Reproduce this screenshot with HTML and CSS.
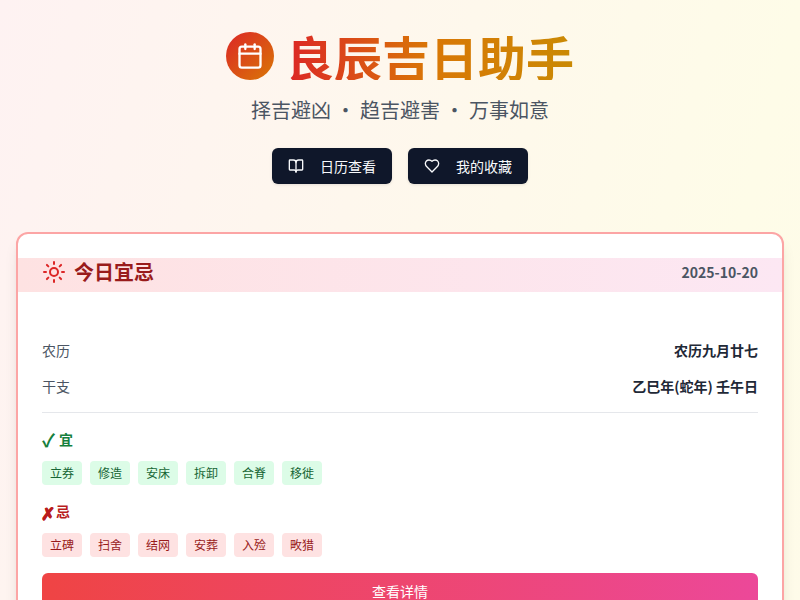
FILE: index.html
```
<!DOCTYPE html>
<html lang="zh-CN">
<head>
    <meta charset="UTF-8">
    <meta name="viewport" content="width=device-width, initial-scale=1.0">
    <title>良辰吉日助手</title>
    <link rel="stylesheet" href="styles.css">
</head>
<body>

<div class="container">
    <!-- 页头 -->
    <header class="header">
        <div class="title-row">
            <div class="logo">
                <svg class="icon logo-icon" viewBox="0 0 24 24"><path d="M8 2v4"/><path d="M16 2v4"/><rect width="18" height="18" x="3" y="4" rx="2"/><path d="M3 10h18"/></svg>
            </div>
            <h1>良辰吉日助手</h1>
        </div>
        <p class="subtitle">择吉避凶 · 趋吉避害 · 万事如意</p>
        <nav class="nav">
            <button class="nav-btn">
                <svg class="icon" viewBox="0 0 24 24"><path d="M12 7v14"/><path d="M3 18a1 1 0 0 1-1-1V4a1 1 0 0 1 1-1h5a4 4 0 0 1 4 4 4 4 0 0 1 4-4h5a1 1 0 0 1 1 1v13a1 1 0 0 1-1 1h-6a3 3 0 0 0-3 3 3 3 0 0 0-3-3z"/></svg>
                日历查看
            </button>
            <button class="nav-btn">
                <svg class="icon" viewBox="0 0 24 24"><path d="M19 14c1.49-1.46 3-3.21 3-5.5A5.5 5.5 0 0 0 16.5 3c-1.76 0-3 .5-4.5 2-1.5-1.5-2.74-2-4.5-2A5.5 5.5 0 0 0 2 8.5c0 2.3 1.5 4.05 3 5.5l7 7Z"/></svg>
                我的收藏
            </button>
        </nav>
    </header>

    <!-- 今日宜忌 -->
    <section class="card">
        <div class="card-header">
            <h2>
                <svg class="icon sun-icon" viewBox="0 0 24 24"><circle cx="12" cy="12" r="4"/><path d="M12 2v2"/><path d="M12 20v2"/><path d="m4.93 4.93 1.41 1.41"/><path d="m17.66 17.66 1.41 1.41"/><path d="M2 12h2"/><path d="M20 12h2"/><path d="m6.34 17.66-1.41 1.41"/><path d="m19.07 4.93-1.41 1.41"/></svg>
                今日宜忌
            </h2>
            <span class="date">2025-10-20</span>
        </div>
        <div class="card-body">
            <div class="info">
                <div class="info-row"><span>农历</span><strong>农历九月廿七</strong></div>
                <div class="info-row"><span>干支</span><strong>乙巳年(蛇年) 壬午日</strong></div>
            </div>
            <div class="group good">
                <h3><span class="mark">✓</span> 宜</h3>
                <div class="tags">
                    <span>立券</span><span>修造</span><span>安床</span><span>拆卸</span><span>合脊</span><span>移徙</span>
                </div>
            </div>
            <div class="group bad">
                <h3><span class="mark">✗</span> 忌</h3>
                <div class="tags">
                    <span>立碑</span><span>扫舍</span><span>结网</span><span>安葬</span><span>入殓</span><span>畋猎</span>
                </div>
            </div>
            <button class="detail-btn">查看详情</button>
        </div>
    </section>
</div>

</body>
</html>
```
FILE: styles.css
```
* {
    margin: 0;
    padding: 0;
    box-sizing: border-box;
}

html {
    height: 100%;
    overflow: hidden;
}

body {
    height: 100%;
    overflow: hidden;
    font-family: "Noto Sans CJK SC", sans-serif;
    font-size: 14px;
    line-height: 20px;
    color: #1f2937;
    background: linear-gradient(to right bottom, #fef2f2, #fefce8, #fff7ed) 0 0 / 100% 3100px no-repeat;
}

.container {
    padding: 32px 16px;
}

.icon {
    width: 16px;
    height: 16px;
    flex-shrink: 0;
    fill: none;
    stroke: currentColor;
    stroke-width: 2;
    stroke-linecap: round;
    stroke-linejoin: round;
}

/* 页头 */
.header {
    text-align: center;
    margin-bottom: 48px;
}

.title-row {
    display: flex;
    align-items: center;
    justify-content: center;
    gap: 12px;
    margin-bottom: 16px;
}

.logo {
    display: flex;
    align-items: center;
    justify-content: center;
    width: 48px;
    height: 48px;
    border-radius: 50%;
    color: #fff;
    background: linear-gradient(to right bottom, #dc2626, #d97706);
}

.logo-icon {
    width: 28px;
    height: 28px;
}

.header h1 {
    font-size: 48px;
    line-height: 48px;
    font-weight: 700;
    color: transparent;
    background: linear-gradient(to right, #dc2626, #d97706, #ca8a04);
    -webkit-background-clip: text;
    background-clip: text;
}

.subtitle {
    font-size: 20px;
    line-height: 28px;
    color: #4b5563;
    margin-bottom: 24px;
}

.nav {
    display: flex;
    justify-content: center;
    gap: 16px;
}

.nav-btn {
    display: flex;
    align-items: center;
    gap: 16px;
    height: 36px;
    padding: 0 16px;
    border: none;
    border-radius: 6px;
    font: inherit;
    color: #f8fafc;
    background: #0f172a;
    box-shadow: 0 1px 3px rgba(0, 0, 0, 0.1);
    cursor: pointer;
}

/* 今日卡片 */
.card {
    padding: 24px 0;
    border: 2px solid #fca5a5;
    border-radius: 12px;
    background: #fff;
    box-shadow: 0 10px 15px -3px rgba(0, 0, 0, 0.1), 0 4px 6px -4px rgba(0, 0, 0, 0.1);
}

.card-header {
    display: flex;
    align-items: center;
    justify-content: space-between;
    height: 34px;
    padding: 0 24px 6px;
    background: linear-gradient(to right, #fee2e2, #fce7f3);
}

.card-header h2 {
    display: flex;
    align-items: center;
    gap: 8px;
    font-size: 20px;
    line-height: 28px;
    color: #991b1b;
}

.sun-icon {
    width: 24px;
    height: 24px;
    color: #dc2626;
}

.date {
    font-weight: 600;
    color: #4b5563;
}

.card-body {
    padding: 48px 24px 0;
}

.info {
    padding-bottom: 16px;
    border-bottom: 1px solid #e5e7eb;
}

.info-row {
    display: flex;
    justify-content: space-between;
    color: #4b5563;
}

.info-row + .info-row {
    margin-top: 16px;
}

.info-row strong {
    color: #1f2937;
}

.group {
    margin-top: 16px;
}

.group h3 {
    display: flex;
    align-items: center;
    height: 20px;
    font-size: 14px;
    line-height: 20px;
    margin-bottom: 12px;
}

.good h3 {
    color: #15803d;
}

.bad h3 {
    color: #b91c1c;
}

.good .mark {
    width: 17px;
    font-size: 18px;
}

.bad .mark {
    width: 15px;
    margin-left: -1px;
    padding-top: 3px;
    font-size: 17px;
    -webkit-text-stroke: 0.5px;
}

.tags {
    display: flex;
    gap: 8px;
}

.tags span {
    padding: 4px 8px;
    border-radius: 4px;
    font-size: 12px;
    line-height: 16px;
}

.good .tags span {
    color: #166534;
    background: #dcfce7;
}

.bad .tags span {
    color: #991b1b;
    background: #fee2e2;
}

.detail-btn {
    width: 100%;
    height: 36px;
    margin-top: 16px;
    border: none;
    border-radius: 6px;
    font: inherit;
    color: #fff;
    background: linear-gradient(to right, #ef4444, #ec4899);
    cursor: pointer;
}
```
